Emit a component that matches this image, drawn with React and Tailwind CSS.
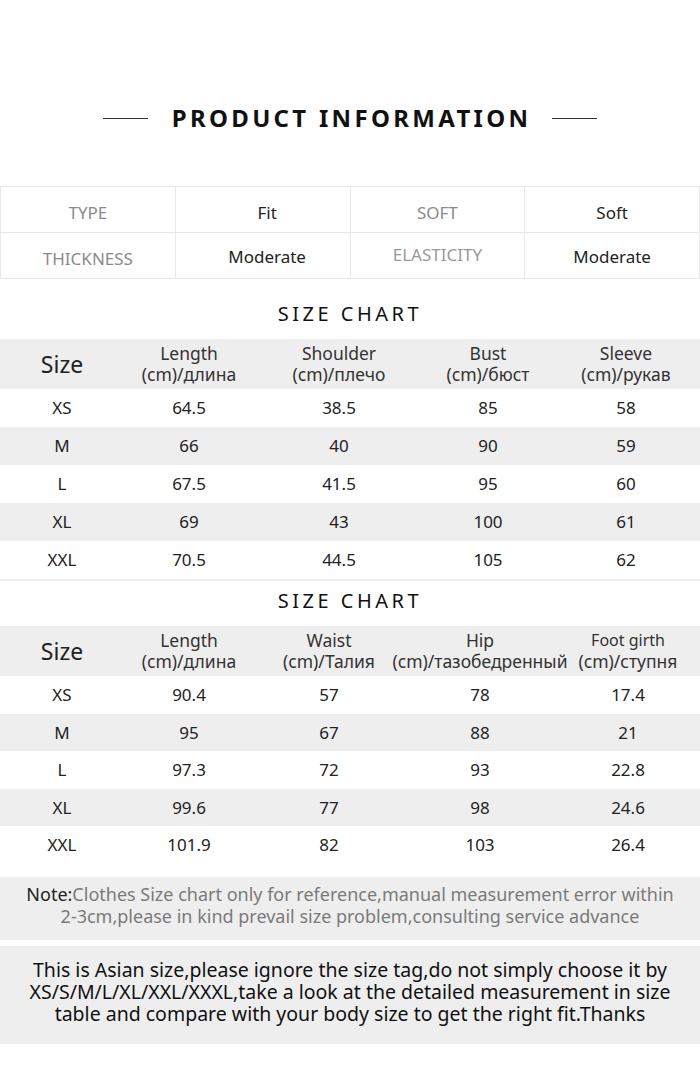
import React from "react";

const font = { fontFamily: '"Noto Sans", "Open Sans", Arial, sans-serif' };

const t1Widths = ["w-[124px]", "w-[130px]", "w-[170px]", "w-[128px]", "w-[148px]"];
const t2Widths = ["w-[124px]", "w-[130px]", "w-[150px]", "w-[152px]", "w-[144px]"];

function SizeTable({ widths, headers, rows, rowH }) {
  return (
    <div>
      <div className="flex h-[50px] items-center bg-[#eeeeee]">
        <div className={`${widths[0]} text-center text-[23px] leading-[28px] text-[#222]`}>Size</div>
        {headers.map((h, i) => (
          <div
            key={i}
            className={`${widths[i + 1]} flex flex-col items-center text-[17.5px] leading-[21px] text-[#333] whitespace-nowrap`}
          >
            <div className={h[2] ? "text-[16px]" : ""}>{h[0]}</div>
            <div>{h[1]}</div>
          </div>
        ))}
      </div>
      {rows.map((r, ri) => (
        <div
          key={ri}
          className={`flex items-center ${rowH} ${ri % 2 === 1 ? "bg-[#eeeeee]" : "bg-white"}`}
        >
          {r.map((c, ci) => (
            <div key={ci} className={`${widths[ci]} text-center text-[17px] text-[#222]`}>
              {c}
            </div>
          ))}
        </div>
      ))}
    </div>
  );
}

export default function App() {
  const info = [
    ["TYPE", "Fit", "SOFT", "Soft"],
    ["THICKNESS", "Moderate", "ELASTICITY", "Moderate"],
  ];
  return (
    <div className="w-[700px] h-[1086px] bg-white" style={font}>
      {/* Title */}
      <div className="h-[186px] pt-[103px] flex justify-center items-start">
        <div className="flex items-center h-[30px]">
          <div className="w-[45px] h-px bg-[#333]" />
          <div className="ml-[24px] mr-[21px] text-[24px] leading-[30px] font-bold tracking-[3.3px] text-[#111]">
            PRODUCT INFORMATION
          </div>
          <div className="w-[45px] h-px bg-[#333]" />
        </div>
      </div>

      {/* Info table */}
      <div className="border-t border-l border-[#e8e8e8]">
        {info.map((row, ri) => (
          <div key={ri} className="grid grid-cols-4 h-[46px]">
            {row.map((c, ci) => (
              <div
                key={ci}
                className={`border-r border-b border-[#e8e8e8] flex items-center justify-center text-[17px] ${
                  ci % 2 === 0 ? "text-[#8a8a8a]" : "text-[#222]"
                } ${ci === 1 ? "pl-[9px]" : ""} ${ri === 0 ? "pt-[6px]" : ""} ${
                  ri === 1 && ci === 0 ? "pt-[6px]" : ""
                } ${ri === 1 && ci === 2 ? "pb-[2px] text-[#999]" : ""} ${
                  ri === 1 && (ci === 1 || ci === 3) ? "pt-[2px]" : ""
                }`}
              >
                {c}
              </div>
            ))}
          </div>
        ))}
      </div>

      {/* Size chart 1 */}
      <div className="h-[60px] pt-[21px] text-center text-[20px] leading-[28px] tracking-[3.5px] text-[#111]">
        SIZE CHART
      </div>
      <SizeTable
        widths={t1Widths}
        rowH="h-[38px]"
        headers={[
          ["Length", "(cm)/длина"],
          ["Shoulder", "(cm)/плечо"],
          ["Bust", "(cm)/бюст"],
          ["Sleeve", "(cm)/рукав"],
        ]}
        rows={[
          ["XS", "64.5", "38.5", "85", "58"],
          ["M", "66", "40", "90", "59"],
          ["L", "67.5", "41.5", "95", "60"],
          ["XL", "69", "43", "100", "61"],
          ["XXL", "70.5", "44.5", "105", "62"],
        ]}
      />
      <div className="h-[2px] bg-[#eeeeee]" />

      {/* Size chart 2 */}
      <div className="h-[45px] pt-[6px] text-center text-[20px] leading-[28px] tracking-[3.5px] text-[#111]">
        SIZE CHART
      </div>
      <SizeTable
        widths={t2Widths}
        rowH="h-[37.5px]"
        headers={[
          ["Length", "(cm)/длина"],
          ["Waist", "(cm)/Талия"],
          ["Hip", "(cm)/тазобедренный"],
          ["Foot girth", "(cm)/ступня", true],
        ]}
        rows={[
          ["XS", "90.4", "57", "78", "17.4"],
          ["M", "95", "67", "88", "21"],
          ["L", "97.3", "72", "93", "22.8"],
          ["XL", "99.6", "77", "98", "24.6"],
          ["XXL", "101.9", "82", "103", "26.4"],
        ]}
      />
      <div className="h-[13.5px]" />

      {/* Note */}
      <div className="h-[63px] bg-[#eeeeee] pt-[6px] flex flex-col items-center text-[18px] leading-[22px] text-[#7a7a7a]">
        <div>
          <span className="text-[#222]">Note:</span>Clothes Size chart only for reference,manual measurement error within
        </div>
        <div>2-3cm,please in kind prevail size problem,consulting service advance</div>
      </div>
      <div className="h-[6px]" />
      <div className="h-[98px] bg-[#eeeeee] pt-[13px] flex flex-col items-center text-[19.5px] leading-[22px] text-[#111]">
        <div>This is Asian size,please ignore the size tag,do not simply choose it by</div>
        <div>XS/S/M/L/XL/XXL/XXXL,take a look at the detailed measurement in size</div>
        <div>table and compare with your body size to get the right fit.Thanks</div>
      </div>
    </div>
  );
}
